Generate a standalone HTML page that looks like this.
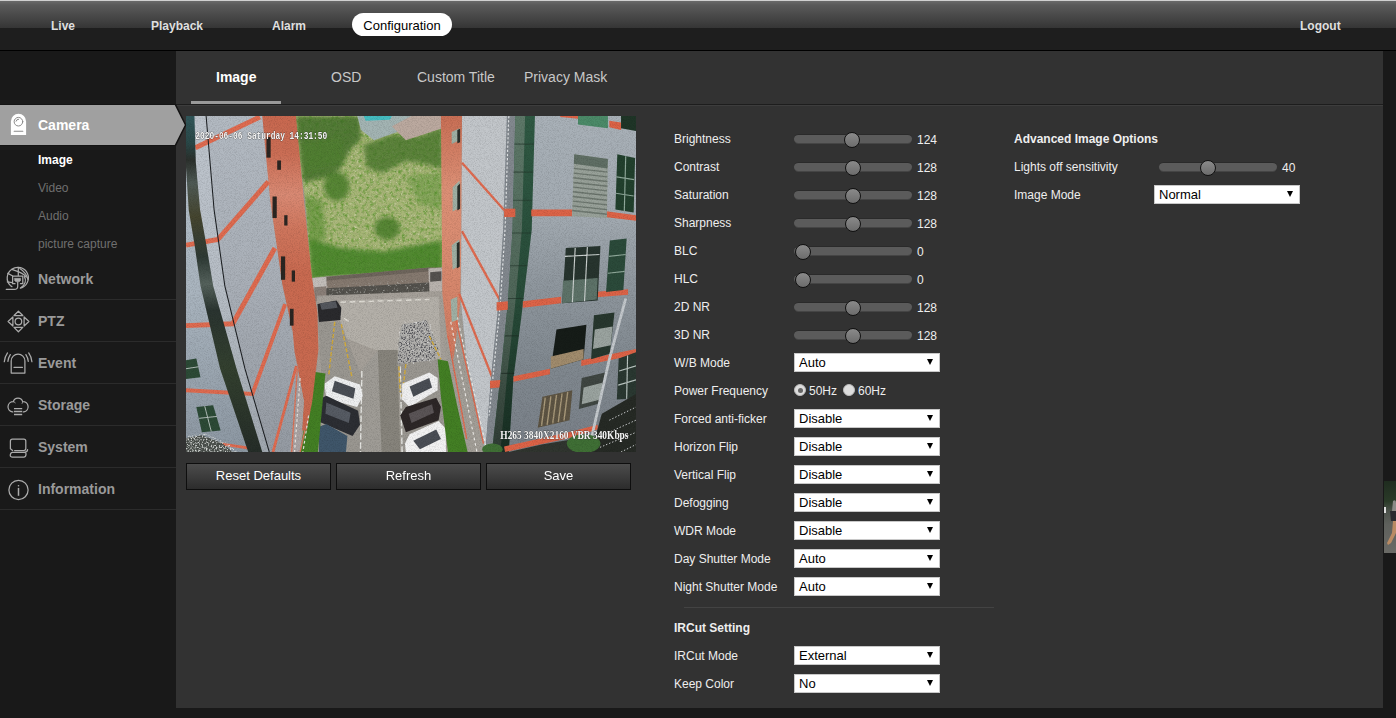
<!DOCTYPE html>
<html><head><meta charset="utf-8"><title>Configuration</title>
<style>
*{box-sizing:border-box;margin:0;padding:0}
html,body{width:1396px;height:718px;overflow:hidden;background:#191919;font-family:"Liberation Sans",sans-serif;font-size:12px;color:#e8e8e8}
.abs{position:absolute}
#top{position:absolute;left:0;top:0;width:1396px;height:51px;background:#1e1e1e;border-bottom:1px solid #000}
#top .grad{position:absolute;left:0;top:0;width:1396px;height:28px;background:linear-gradient(#6a6a6a 0,#5a5a5a 4px,#3a3a3a 24px,#333 28px);border-top:1px solid #d0d0d0}
.nav{position:absolute;top:19px;font-weight:bold;font-size:12px;line-height:14px;color:#dfdfdf;white-space:nowrap}
#pill{position:absolute;left:352px;top:13px;width:100px;height:23px;border-radius:12px;background:#fff;color:#000;font-size:13px;line-height:25px;text-align:center}
#side{position:absolute;left:0;top:51px;width:176px;height:667px;background:#191919}
#content{position:absolute;left:176px;top:51px;width:1207px;height:657px;background:#323232}
#tabline{position:absolute;left:176px;top:104px;width:1207px;height:2px;background:#1d1d1d;border-bottom:1px solid #3d3d3d}
#tabul{position:absolute;left:191px;top:101px;width:90px;height:3px;background:#9a9a9a}
.tab{position:absolute;top:69px;font-size:14px;line-height:16px;color:#c8c8c8;white-space:nowrap}
.mi{position:absolute;left:0;width:176px;height:42px;border-bottom:1px solid #2b2b2b}
.mi span{position:absolute;left:38px;top:13px;font-weight:bold;font-size:14px;line-height:16px;color:#9a9a9a}
.sub{position:absolute;left:38px;font-size:12px;line-height:14px;color:#6f6f6f;white-space:nowrap}
.lbl{position:absolute;font-size:12px;line-height:14px;color:#eee;white-space:nowrap}
.trk{position:absolute;width:118px;height:9px;border-radius:4.5px;background:#5b5b5b;border-top:1px solid #2a2a2a;box-shadow:0 1px 0 #454545}
.th{position:absolute;width:16px;height:16px;border-radius:50%;background:linear-gradient(#8a8a8a,#6c6c6c);border:1px solid #111;top:-3px}
.sel{position:absolute;width:146px;height:19px;background:#fff;border:1px solid #c8c8c8;color:#000;font-size:13px;line-height:17px;padding-left:4px}
.sel:after{content:"";position:absolute;right:6px;top:5px;border-left:3.5px solid transparent;border-right:3.5px solid transparent;border-top:6px solid #000}
.btn{position:absolute;top:463px;width:145px;height:27px;border:1px solid #0e0e0e;background:linear-gradient(#4c4c4c,#2c2c2c);color:#fff;font-size:13px;line-height:24px;text-align:center}
.radio{position:absolute;width:12px;height:12px;border-radius:50%;background:#ddd;border:1px solid #bbb}
.radio.on:after{content:"";position:absolute;left:2.5px;top:2.5px;width:5px;height:5px;border-radius:50%;background:#666}
#video{position:absolute;left:186px;top:116px;width:450px;height:336px;background:#8a8f92;overflow:hidden}
#thumb{position:absolute;left:1384px;top:481px;width:12px;height:72px;background:linear-gradient(#1f2c1f 0,#2a3a28 28%,#4c524b 42%,#5e605c 60%,#6a6a66 100%)}

</style></head><body>
<div id="top"><div class="grad"></div>
<div class="nav" style="left:51px">Live</div>
<div class="nav" style="left:151px">Playback</div>
<div class="nav" style="left:272px">Alarm</div>
<div id="pill">Configuration</div>
<div class="nav" style="left:1300px">Logout</div>
</div>
<div id="side"></div>
<div id="content"></div>
<div id="tabline"></div>
<div class="tab" style="left:216px;font-weight:bold;color:#fff">Image</div>
<div id="tabul"></div>
<div class="tab" style="left:331px">OSD</div>
<div class="tab" style="left:417px">Custom Title</div>
<div class="tab" style="left:524px">Privacy Mask</div>
<svg class="abs" style="left:0;top:104px" width="190" height="42" viewBox="0 0 190 42"><polygon points="-2,0.3 175.3,0.3 185.6,21 175.3,41.7 -2,41.7" fill="#a0a0a0" stroke="#131313" stroke-width="1.5"/></svg>
<div class="abs" style="left:38px;top:117px;font-weight:bold;font-size:14px;line-height:16px;color:#fff">Camera</div>
<div class="sub" style="top:153px;color:#fff;font-weight:bold">Image</div>
<div class="sub" style="top:181px">Video</div>
<div class="sub" style="top:209px">Audio</div>
<div class="sub" style="top:237px">picture capture</div>
<div class="mi" style="top:258px"><span>Network</span></div>
<div class="mi" style="top:300px"><span>PTZ</span></div>
<div class="mi" style="top:342px"><span>Event</span></div>
<div class="mi" style="top:384px"><span>Storage</span></div>
<div class="mi" style="top:426px"><span>System</span></div>
<div class="mi" style="top:468px"><span>Information</span></div>
<svg class="abs" style="left:0;top:100px" width="40" height="420" viewBox="0 100 40 420" fill="none" stroke="#ababab" stroke-width="1.25" stroke-linecap="round" stroke-linejoin="round">
<!-- camera -->
<path d="M10.9 135 V121.4 A7.6 7.6 0 0 1 26.1 121.4 V135 Z" fill="#fff" stroke="none"/>
<circle cx="18.45" cy="121.7" r="4.3" stroke="#8a8a8a" stroke-width="1"/>
<path d="M16 121.2 A2.6 2.6 0 0 1 18.6 119.2" stroke="#8a8a8a" stroke-width="1"/>
<path d="M14.2 131.3 H22.8" stroke="#8a8a8a" stroke-width="1.1"/>
<!-- network -->
<path d="M12 286.7 L10.3 285.4 A10.6 10.6 0 1 1 20.3 288.2"/>
<path d="M18.3 267.4 V275.6"/>
<path d="M12 269.4 C15 271 21.5 271.5 26.3 277"/>
<path d="M19.8 268.6 C23.5 271 27 275 27.9 279.5"/>
<path d="M7.8 273.4 L12.3 275.8"/>
<path d="M7.3 281.9 L12.3 282.6"/>
<path d="M24.4 276.6 C26.5 280 25.5 285 20.8 287.8"/>
<path d="M15 283.7 H12.6 V276 H22.8 V283.7 H20.4"/>
<path d="M14.6 278.3 H20.6 V280.2 L19.4 281.8 H15.8 L14.6 280.2 Z" fill="#ababab" stroke-width="0.6"/>
<path d="M17.7 282 V286.2 Q17.7 289.4 14.2 289.4 H6.3"/>
<!-- ptz -->
<circle cx="18.4" cy="321.5" r="3.3"/>
<path d="M18.4 311.2 L22.8 315.5 H14 Z"/>
<path d="M18.4 331.8 L22.8 327.4 H14 Z"/>
<path d="M8.1 321.5 L12.9 317 V326 Z"/>
<path d="M28.9 321.5 L24.1 317 V326 Z"/>
<!-- event -->
<path d="M11.2 373 V361 A6.85 6.85 0 0 1 24.9 361 V373 Z"/>
<path d="M14 367.4 H22.4"/>
<path d="M7.5 352.9 Q4.9 356.5 4.3 361.7"/>
<path d="M10.3 354.6 Q8.4 357.5 7.9 361.4"/>
<path d="M28.7 352.9 Q31.3 356.5 31.9 361.7"/>
<path d="M25.9 354.6 Q27.8 357.5 28.3 361.4"/>
<!-- storage -->
<path d="M12.8 411.9 H12.2 A5.2 5.2 0 0 1 13.3 401.6 A4.9 4.9 0 0 1 22.7 401.6 A5.2 5.2 0 0 1 23.9 411.9 H23.3"/>
<path d="M13.3 401.6 Q14.4 401.9 15.2 402.7 M22.7 401.6 Q22.6 402.4 22.2 403.3" stroke-width="1"/>
<path d="M14 408.6 H22.2 M14 411.5 H22.2 M14 414.5 H22.2" stroke-width="1.4" stroke-linecap="butt"/>
<!-- system -->
<path d="M12.6 450.5 L10.4 448.8 V441.2 Q10.4 439.2 12.4 439.2 H23.8 Q25.8 439.2 25.8 441.2 V448.6 Q25.8 450.5 23.8 450.5 H14.6"/>
<path d="M12.4 452.3 H24.4 Q26.3 452.3 26 454.6 Q25.7 457 23.8 457 H12 Q10 457 10.3 454.8 Q10.7 452.3 12.4 452.3 Z"/>
<path d="M24.4 452.3 Q27.6 452.3 27.6 449.6"/>
<!-- info -->
<circle cx="18.5" cy="489.9" r="9.6"/>
<path d="M18.5 487.9 V495.8" stroke-width="1.5" stroke-linecap="butt"/>
<circle cx="18.5" cy="485.7" r="0.8" fill="#ababab" stroke="none"/>
</svg>
<div id="video"><svg width="450" height="336" viewBox="0 0 962 718" preserveAspectRatio="none" style="display:block">
<defs>
<linearGradient id="lw" x1="0" y1="0" x2="0" y2="1"><stop offset="0" stop-color="#b3bac2"/><stop offset="0.5" stop-color="#a9afb7"/><stop offset="1" stop-color="#959ba3"/></linearGradient>
<linearGradient id="fl" x1="0" y1="0" x2="0" y2="1"><stop offset="0" stop-color="#b2bdc7"/><stop offset="0.45" stop-color="#a9b4be"/><stop offset="1" stop-color="#8c97a2"/></linearGradient>
<linearGradient id="gl" x1="0" y1="0" x2="1" y2="0"><stop offset="0" stop-color="#5c7767"/><stop offset="0.5" stop-color="#55705f"/><stop offset="0.52" stop-color="#2f5641"/><stop offset="1" stop-color="#2a4d3a"/></linearGradient>
<linearGradient id="gld" x1="0" y1="0" x2="0" y2="1"><stop offset="0" stop-color="#000" stop-opacity="0"/><stop offset="0.55" stop-color="#000" stop-opacity="0.15"/><stop offset="1" stop-color="#000" stop-opacity="0.5"/></linearGradient>
<linearGradient id="rw" x1="0" y1="0" x2="0" y2="1"><stop offset="0" stop-color="#a9b1b8"/><stop offset="0.3" stop-color="#a2aab1"/><stop offset="0.5" stop-color="#8f979e"/><stop offset="0.75" stop-color="#80888f"/><stop offset="1" stop-color="#798088"/></linearGradient>
<linearGradient id="ls" x1="0" y1="0" x2="0" y2="1"><stop offset="0" stop-color="#31575a"/><stop offset="0.08" stop-color="#2a4848"/><stop offset="0.13" stop-color="#2b302c"/><stop offset="0.2" stop-color="#4f5a55"/><stop offset="0.3" stop-color="#45452f"/><stop offset="0.42" stop-color="#2e3a35"/><stop offset="0.5" stop-color="#55625c"/><stop offset="0.58" stop-color="#2a3430"/><stop offset="0.75" stop-color="#33402f"/><stop offset="1" stop-color="#252d28"/></linearGradient>
<filter id="nz" x="0" y="0" width="100%" height="100%"><feTurbulence type="fractalNoise" baseFrequency="0.13" numOctaves="3" seed="3" result="n"/><feColorMatrix in="n" type="matrix" values="0 0 0 0 0  0 0 0 0 0  0 0 0 0 0  0 0 0 -2.2 1.2" result="a"/><feComposite in="SourceGraphic" in2="a" operator="in"/></filter>
<filter id="nz2" x="0" y="0" width="100%" height="100%"><feTurbulence type="fractalNoise" baseFrequency="0.2" numOctaves="2" seed="11" result="n"/><feColorMatrix in="n" type="matrix" values="0 0 0 0 0  0 0 0 0 0  0 0 0 0 0  0 0 0 -3 1.25" result="a"/><feComposite in="SourceGraphic" in2="a" operator="in"/></filter>
<filter id="nz3" x="0" y="0" width="100%" height="100%"><feTurbulence type="fractalNoise" baseFrequency="0.3" numOctaves="2" seed="5" result="n"/><feColorMatrix in="n" type="matrix" values="0 0 0 0 0  0 0 0 0 0  0 0 0 0 0  0 0 0 -4 2.1" result="a"/><feComposite in="SourceGraphic" in2="a" operator="in"/></filter>
<filter id="bl" x="-10%" y="-10%" width="120%" height="120%"><feGaussianBlur stdDeviation="5"/></filter>
<clipPath id="vc"><polygon points="230,0 548,0 548,326 300,342 268,346 255,180"/></clipPath>
<filter id="grain" x="0" y="0" width="100%" height="100%"><feTurbulence type="fractalNoise" baseFrequency="0.55" numOctaves="2" seed="7" result="n"/><feColorMatrix in="n" type="matrix" values="0 0 0 0 0  0 0 0 0 0  0 0 0 0 0  0 0 0 -1.6 0.95"/></filter>
<linearGradient id="ob" x1="0" y1="0" x2="0" y2="1"><stop offset="0" stop-color="#c8684f"/><stop offset="0.12" stop-color="#cb6e55"/><stop offset="0.25" stop-color="#d98a74"/><stop offset="0.36" stop-color="#cf765d"/><stop offset="0.5" stop-color="#c96a50"/><stop offset="1" stop-color="#c8694f"/></linearGradient>
<linearGradient id="oe" x1="0" y1="0" x2="0" y2="1"><stop offset="0" stop-color="#c96f55"/><stop offset="0.3" stop-color="#dc9076"/><stop offset="0.6" stop-color="#d98b70"/><stop offset="1" stop-color="#cf7a60"/></linearGradient>
<linearGradient id="lb" x1="0" y1="0" x2="0" y2="1"><stop offset="0" stop-color="#bdc4cc"/><stop offset="0.5" stop-color="#b7bec6"/><stop offset="1" stop-color="#a0a7af"/></linearGradient>
</defs>
<rect width="962" height="718" fill="#a29e97"/>
<!-- vegetation -->
<polygon points="230,0 548,0 548,326 300,342 268,346 255,180" fill="#a8b678"/>
<g filter="url(#nz)"><polygon points="230,0 548,0 548,326 300,342 268,346 255,180" fill="#629a34"/></g>
<g filter="url(#nz2)"><polygon points="230,0 548,0 548,326 300,342 268,346 255,180" fill="#cfd4ad"/></g>
<g filter="url(#bl)" clip-path="url(#vc)">
<polygon points="235,0 372,0 374,50 352,70 330,112 296,132 250,142" fill="#3f6d26" opacity="0.8"/>
<polygon points="248,60 330,48 340,100 252,120" fill="#4f8030" opacity="0.6"/>
<polygon points="380,62 440,40 500,44 548,22 548,112 500,100 470,96 420,122 386,110" fill="#437429" opacity="0.75"/>
<ellipse cx="322" cy="150" rx="27" ry="31" fill="#4a7e2b" opacity="0.85"/>
<ellipse cx="430" cy="240" rx="27" ry="24" fill="#4a7e2b" opacity="0.85"/>
<polygon points="262,262 330,282 420,290 548,266 548,332 300,348 268,352" fill="#438325" opacity="0.85"/>
<polygon points="252,170 290,180 300,260 264,280" fill="#4f8a2c" opacity="0.55"/>
<polygon points="470,130 548,120 548,200 500,190" fill="#5a9230" opacity="0.45"/>
</g>
<polygon points="366,0 482,0 470,28 402,52 374,30" fill="#a3b4b3"/>
<polygon points="380,0 440,0 436,8 384,10" fill="#45bcc0"/>
<polygon points="440,22 482,0 548,0 548,26 470,52" fill="#bba99f"/>
<!-- wall behind -->
<polygon points="298,344 522,324 548,324 548,372 298,378" fill="#85796f"/>
<polygon points="298,344 522,324 522,332 298,352" fill="#6e655c"/>
<polygon points="270,346 300,344 302,392 274,398" fill="#c2bdb9"/>
<polygon points="274,366 300,364 302,392 274,398" fill="#8a7f78"/>
<polygon points="518,326 548,324 548,378 520,374" fill="#b9b3ae"/>
<polygon points="522,334 546,332 546,352 522,354" fill="#55524f"/>
<polygon points="300,368 520,356 520,378 300,388" fill="#54524d"/>
<g filter="url(#nz2)"><polygon points="300,360 520,348 520,380 300,390" fill="#b9b9b4"/></g>
<!-- road -->
<polygon points="280,384 548,374 566,718 255,718 275,520" fill="#a5a099"/>
<polygon points="330,394 540,386 545,520 455,500 405,500 330,470" fill="#b4b0a9"/>
<polygon points="378,540 408,504 418,500 420,718 372,718" fill="#9f9c96"/>
<polygon points="410,500 452,500 458,718 418,718" fill="#87847c"/>
<polygon points="282,440 330,440 376,560 376,718 300,718 290,560" fill="#9a9791"/>
<polygon points="455,530 540,520 556,718 460,718" fill="#9a9791"/>
<path d="M376 545 L373 718 M458 535 L462 718" stroke="#e6e6e2" stroke-width="3" stroke-dasharray="14 5" fill="none"/>
<path d="M300 420 L330 428 L350 440 M330 398 L520 392" stroke="#dedbd4" stroke-width="3" stroke-dasharray="12 8" fill="none"/>
<!-- rubbish pile -->
<polygon points="462,445 515,436 540,500 530,522 452,530 455,480" fill="#b1b0ad"/>
<g filter="url(#nz2)"><polygon points="458,440 518,432 544,500 532,526 450,534 452,480" fill="#e9e9e9"/></g>
<g filter="url(#nz3)"><polygon points="462,445 515,436 540,500 530,522 452,530 455,480" fill="#55555a"/></g>
<!-- yellow lines -->
<path d="M318 440 L305 555 M332 445 L355 560 M470 530 L462 600 M455 535 L458 590 M520 470 L545 520" stroke="#d0a93a" stroke-width="3" stroke-dasharray="9 4" fill="none"/>
<!-- cars -->
<polygon points="281,402 322,394 332,410 330,436 284,440" fill="#2a2a2d"/>
<polygon points="286,400 320,396 324,410 290,414" fill="#55585e"/>
<polygon points="296,572 318,556 372,574 378,598 366,622 300,604" fill="#eeeff0"/>
<polygon points="318,566 362,582 358,604 312,588" fill="#4a4e55"/>
<polygon points="284,606 300,598 368,630 372,660 356,684 286,654" fill="#2c2e33"/>
<polygon points="300,612 352,634 348,656 298,636" fill="#565b63"/>
<polygon points="284,664 300,658 345,684 342,718 284,718" fill="#3f566a"/>
<polygon points="462,572 520,548 538,560 538,586 478,622 462,606" fill="#f0f0f1"/>
<polygon points="478,578 520,560 526,580 486,600" fill="#4a4e55"/>
<polygon points="458,640 470,622 535,602 545,622 540,650 470,676" fill="#2d2727"/>
<polygon points="476,636 526,616 530,634 482,656" fill="#5a5456"/>
<polygon points="468,700 478,680 540,652 555,668 556,718 470,718" fill="#f2f2f2"/>
<polygon points="486,694 535,670 545,690 500,712" fill="#4a4e55"/>
<!-- hedges -->
<polygon points="270,546 298,550 282,718 244,718" fill="#437f24"/>
<polygon points="538,520 560,524 580,620 602,718 560,718 545,600" fill="#437f24"/>
<!-- LEFT BUILDING -->
<polygon points="0,0 165,0 180,180 206,360 228,460 240,540 238,640 232,718 0,718" fill="url(#lw)"/>
<polygon points="0,100 6,202 31,363 73,540 133,718 0,718" fill="url(#fl)"/>
<!-- orange band -->
<polygon points="163,0 235,0 252,180 270,350 281,420 283,500 270,609 258,672 248,672 252,609 232,504 228,460 206,360 180,180" fill="url(#ob)"/>
<polygon points="232,504 252,609 248,672 244,718 222,718 236,620 240,540" fill="#aaa3a3"/>
<path d="M244 560 L232 718 M262 640 L250 718" stroke="#e8e4e0" stroke-width="2.5" stroke-dasharray="6 5" fill="none"/>
<path d="M238 540 L226 718 M254 672 L244 718" stroke="#d9765c" stroke-width="3" fill="none"/>
<polygon points="18,0 43,0 60,200 83,363 126,540 178,718 163,718 108,540 58,363 43,273 30,200 21,100" fill="url(#lb)"/>
<!-- stripes -->
<g stroke="#de6b50" stroke-width="10.5" fill="none">
<path d="M20 68 L158 2"/>
<path d="M0 276 L68 264 L176 140"/>
<path d="M0 448 L100 444 L190 282"/>
<path d="M0 586 L142 594 L212 402" stroke-width="8.5"/>
<path d="M186 718 L236 534" stroke-width="6"/>
<path d="M70 700 L150 712" stroke-width="6"/>
</g>
<!-- left glass strip -->
<polygon points="0,0 18,0 21,100 30,200 43,273 58,363 108,540 163,718 133,718 73,540 31,363 18,273 6,202 0,110" fill="url(#ls)"/>
<path d="M43 0 L60 200 L83 363 L126 540 L178 718" stroke="#1c1f22" stroke-width="2.2" fill="none"/>
<!-- left windows -->
<polygon points="0,522 22,518 31,558 0,562" fill="#2c4a36"/>
<polygon points="22,622 58,618 74,672 34,676" fill="#2c4a36"/>
<path d="M0 540 L26 536 M28 646 L66 642 M40 620 L54 674" stroke="#b9c4c0" stroke-width="2"/>
<!-- dark dots on orange band -->
<g fill="#2b2622"><rect x="172" y="45" width="9" height="44"/><rect x="195" y="95" width="8" height="20"/><rect x="185" y="172" width="9" height="46"/><rect x="210" y="212" width="7" height="22"/><rect x="203" y="300" width="9" height="50"/><rect x="226" y="330" width="7" height="24"/><rect x="222" y="412" width="8" height="36"/></g>
<!-- RIGHT BUILDING -->
<polygon points="590,0 962,0 962,718 640,718 600,520 588,400" fill="url(#rw)"/>
<polygon points="590,0 686,0 678,244 668,400 652,560 640,718 600,520 588,400" fill="#c2c6ca"/>
<!-- orange edge -->
<polygon points="545,0 590,0 588,300 586,400 578,470 572,520 558,470 548,380" fill="url(#oe)"/>
<g stroke="#de6b50" stroke-width="5" fill="none"><path d="M590 100 L690 212"/><path d="M590 246 L680 410"/><path d="M584 380 L660 572"/><path d="M574 420 L636 700" stroke-width="3"/><path d="M560 470 L600 690" stroke-width="3"/></g>
<path d="M566 440 L622 718 M580 430 L644 718" stroke="#eceae6" stroke-width="2.5" stroke-dasharray="6 6" fill="none"/>
<g fill="#9fb0a4"><polygon points="568,34 585,26 585,52 568,60"/><polygon points="570,152 585,138 585,196 570,204"/><polygon points="568,276 584,264 584,320 570,328"/><polygon points="566,392 580,386 580,436 568,440"/></g>
<g fill="#2a2f2a"><polygon points="580,30 586,27 586,56 580,58"/><polygon points="580,150 586,144 586,198 580,202"/><polygon points="579,272 585,268 585,322 579,326"/></g>
<!-- grey band + glass strip -->
<polygon points="686,0 704,0 698,244 688,400 672,560 654,718 640,718 652,560 668,400 678,244" fill="#82888e"/>
<polygon points="704,0 746,0 739,244 718,420 700,560 690,718 654,718 672,560 688,400 698,244" fill="#2f5943"/>
<polygon points="704,0 725,0 718,244 703,410 686,560 672,718 654,718 672,560 688,400 698,244" fill="#5d7868"/>
<path d="M702 60 L744 60 M700 120 L742 120 M699 180 L740 180 M697 250 L738 250 M693 320 L730 320 M688 390 L722 390 M682 470 L712 470 M674 550 L702 550" stroke="#24382d" stroke-width="2.5" opacity="0.6"/>
<polygon points="704,0 746,0 739,244 718,420 700,560 690,718 654,718 672,560 688,400 698,244" fill="url(#gld)"/>
<path d="M690 0 L682 244 L672 400 L648 640" stroke="#e3e6e8" stroke-width="2.5" stroke-dasharray="5 4" fill="none"/>
<!-- right wall stripes -->
<g fill="#dc6347"><polygon points="738,200 826,200 826,214 738,214"/><polygon points="895,203 962,212 962,224 895,216"/><polygon points="680,198 704,198 704,216 680,216"/><polygon points="720,396 802,386 802,400 720,410"/><polygon points="870,376 945,370 945,382 870,388"/><polygon points="664,398 688,396 688,414 664,416"/><polygon points="700,556 778,540 778,552 700,568"/><polygon points="845,522 962,498 962,510 845,534"/><polygon points="905,10 930,14 930,30 905,24"/><polygon points="800,0 838,0 838,6 800,2"/><polygon points="680,706 818,676 880,660 880,670 820,688 682,718"/><polygon points="650,566 672,564 670,580 650,582"/></g>
<!-- windows -->
<polygon points="838,0 902,0 902,26 838,18" fill="#4b8a68"/>
<polygon points="930,0 962,0 962,32 930,26" fill="#1f3527"/>
<polygon points="830,82 902,92 900,218 825,214" fill="#98a199"/>
<polygon points="830,82 902,92 901,112 829,102" fill="#5f6e64"/>
<g stroke="#6d776f" stroke-width="3"><path d="M829 112 L901 120 M829 122 L901 130 M828 132 L901 140 M828 142 L901 150 M828 152 L900 160 M827 162 L900 170 M827 172 L900 180 M827 182 L900 190 M826 192 L900 200 M826 202 L900 210"/></g>
<polygon points="922,82 960,90 957,206 918,200" fill="#22402d"/>
<path d="M920 130 L958 136 M919 165 L957 171 M940 86 L937 204" stroke="#8fa89a" stroke-width="2.5"/>
<polygon points="812,282 886,278 880,394 804,400" fill="#27342e"/>
<polygon points="806,352 880,346 878,392 804,400" fill="#5d7268"/>
<path d="M810 300 L884 296 M832 282 L826 398 M858 280 L852 396" stroke="#c9cfcd" stroke-width="2.5"/>
<polygon points="906,266 942,262 935,372 898,376" fill="#2b4a3a"/>
<path d="M904 300 L940 296 M902 336 L938 332" stroke="#8fa89a" stroke-width="2.5"/>
<polygon points="792,456 856,446 850,520 780,540" fill="#161c18"/>
<polygon points="780,514 850,498 850,520 780,540" fill="#a08b6c"/>
<polygon points="872,426 916,420 906,508 866,520" fill="#27372e"/>
<polygon points="874,456 912,450 908,490 870,498" fill="#9aa39f"/>
<polygon points="762,600 826,586 820,650 752,666" fill="#5d5443"/>
<path d="M768 602 L760 662 M780 599 L772 660 M792 596 L784 657 M804 593 L796 654 M816 590 L808 651" stroke="#a8997a" stroke-width="3"/>
<polygon points="846,560 896,548 886,614 840,626" fill="#3f4642"/>
<polygon points="850,580 890,570 886,606 846,616" fill="#9aa39f"/>
<polygon points="925,518 962,505 962,603 921,606" fill="#2a3831"/>
<path d="M926 545 L962 534 M924 575 L962 564 M944 512 L942 604" stroke="#b9c4c0" stroke-width="2.5"/>
<polygon points="889,636 962,594 962,718 866,718" fill="#262a25"/>
<polygon points="690,718 760,702 830,690 856,718" fill="#30352f"/>
<path d="M940 390 L905 520 L860 718" stroke="#c3c8cc" stroke-width="6" fill="none"/>
<path d="M905 650 L962 622 M895 680 L962 650 M885 708 L962 676 M930 718 L962 702" stroke="#d9dcde" stroke-width="2" stroke-dasharray="3 4"/>
<!-- greenery bottom -->
<polygon points="0,688 34,682 76,698 100,718 0,718" fill="#4a4f4b"/>
<g filter="url(#nz3)"><polygon points="0,684 40,678 90,700 110,718 0,718" fill="#d5d8d6"/></g>
<ellipse cx="850" cy="700" rx="36" ry="20" fill="#3f6f35"/>
<ellipse cx="655" cy="712" rx="22" ry="12" fill="#3f6f35"/>
<rect width="962" height="718" filter="url(#grain)" opacity="0.16"/>
<!-- OSD -->
<g font-family="'Liberation Mono',monospace" font-size="25" font-weight="bold" fill="#f4f4f4" stroke="#222" stroke-width="1.2" paint-order="stroke">
<text x="20" y="50" textLength="282" lengthAdjust="spacingAndGlyphs">2020-06-06 Saturday 14:31:50</text>
<text x="672" y="690" textLength="274" lengthAdjust="spacingAndGlyphs" font-family="'Liberation Serif',serif" font-size="27">H265 3840X2160 VBR 340Kbps</text>
</g>
</svg>
</div>
<div class="btn" style="left:186px">Reset Defaults</div><div class="btn" style="left:336px">Refresh</div><div class="btn" style="left:486px">Save</div>
<div class="lbl" style="left:674px;top:132px">Brightness</div><div class="trk" style="left:794px;top:134px"><div class="th" style="left:50px"></div></div><div class="lbl" style="left:917px;top:133px">124</div>
<div class="lbl" style="left:674px;top:160px">Contrast</div><div class="trk" style="left:794px;top:162px"><div class="th" style="left:51px"></div></div><div class="lbl" style="left:917px;top:161px">128</div>
<div class="lbl" style="left:674px;top:188px">Saturation</div><div class="trk" style="left:794px;top:190px"><div class="th" style="left:51px"></div></div><div class="lbl" style="left:917px;top:189px">128</div>
<div class="lbl" style="left:674px;top:216px">Sharpness</div><div class="trk" style="left:794px;top:218px"><div class="th" style="left:51px"></div></div><div class="lbl" style="left:917px;top:217px">128</div>
<div class="lbl" style="left:674px;top:244px">BLC</div><div class="trk" style="left:794px;top:246px"><div class="th" style="left:1px"></div></div><div class="lbl" style="left:917px;top:245px">0</div>
<div class="lbl" style="left:674px;top:272px">HLC</div><div class="trk" style="left:794px;top:274px"><div class="th" style="left:1px"></div></div><div class="lbl" style="left:917px;top:273px">0</div>
<div class="lbl" style="left:674px;top:300px">2D NR</div><div class="trk" style="left:794px;top:302px"><div class="th" style="left:51px"></div></div><div class="lbl" style="left:917px;top:301px">128</div>
<div class="lbl" style="left:674px;top:328px">3D NR</div><div class="trk" style="left:794px;top:330px"><div class="th" style="left:51px"></div></div><div class="lbl" style="left:917px;top:329px">128</div>
<div class="lbl" style="left:674px;top:356px">W/B Mode</div><div class="sel" style="left:794px;top:353px">Auto</div>
<div class="lbl" style="left:674px;top:384px">Power Frequency</div><div class="radio on" style="left:794px;top:384px"></div><div class="lbl" style="left:809px;top:384px">50Hz</div><div class="radio" style="left:843px;top:384px"></div><div class="lbl" style="left:858px;top:384px">60Hz</div>
<div class="lbl" style="left:674px;top:412px">Forced anti-ficker</div><div class="sel" style="left:794px;top:409px">Disable</div>
<div class="lbl" style="left:674px;top:440px">Horizon Flip</div><div class="sel" style="left:794px;top:437px">Disable</div>
<div class="lbl" style="left:674px;top:468px">Vertical Flip</div><div class="sel" style="left:794px;top:465px">Disable</div>
<div class="lbl" style="left:674px;top:496px">Defogging</div><div class="sel" style="left:794px;top:493px">Disable</div>
<div class="lbl" style="left:674px;top:524px">WDR Mode</div><div class="sel" style="left:794px;top:521px">Disable</div>
<div class="lbl" style="left:674px;top:552px">Day Shutter Mode</div><div class="sel" style="left:794px;top:549px">Auto</div>
<div class="lbl" style="left:674px;top:580px">Night Shutter Mode</div><div class="sel" style="left:794px;top:577px">Auto</div>
<div class="abs" style="left:684px;top:607px;width:310px;height:1px;background:#434343"></div>
<div class="lbl" style="left:674px;top:621px;font-weight:bold">IRCut Setting</div>
<div class="lbl" style="left:674px;top:649px">IRCut Mode</div><div class="sel" style="left:794px;top:646px">External</div>
<div class="lbl" style="left:674px;top:677px">Keep Color</div><div class="sel" style="left:794px;top:674px">No</div>
<div class="lbl" style="left:1014px;top:132px;font-weight:bold">Advanced Image Options</div>
<div class="lbl" style="left:1014px;top:160px">Lights off sensitivity</div><div class="trk" style="left:1159px;top:162px"><div class="th" style="left:41px"></div></div><div class="lbl" style="left:1282px;top:161px">40</div>
<div class="lbl" style="left:1014px;top:188px">Image Mode</div><div class="sel" style="left:1154px;top:185px">Normal</div>
<div id="thumb"><svg width="12" height="72" viewBox="0 0 12 72" style="display:block"><path d="M9 20 Q12 18 12 22 V30 H8 Z" fill="#8a8a86"/><path d="M6 30 H12 V40 H7 Z" fill="#2a2a30"/><path d="M9 40 H12 V52 L7 62 L4 64 L3 62 L8 52 Z" fill="#b98a63"/><rect x="0" y="26" width="2" height="6" fill="#ddd"/></svg></div>
</body></html>
